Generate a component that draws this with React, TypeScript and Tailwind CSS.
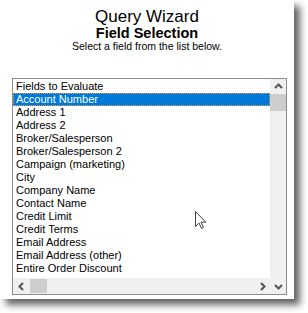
const fields = [
  "Account Number",
  "Address 1",
  "Address 2",
  "Broker/Salesperson",
  "Broker/Salesperson 2",
  "Campaign (marketing)",
  "City",
  "Company Name",
  "Contact Name",
  "Credit Limit",
  "Credit Terms",
  "Email Address",
  "Email Address (other)",
  "Entire Order Discount",
];

function Chevron({ dir }: { dir: "up" | "down" | "left" | "right" }) {
  const pts = {
    up: "1,6 4.5,2.5 8,6",
    down: "1,3 4.5,6.5 8,3",
    left: "6,1 2.5,4.5 6,8",
    right: "3,1 6.5,4.5 3,8",
  }[dir];
  return (
    <svg width="9" height="9" viewBox="0 0 9 9">
      <polyline points={pts} fill="none" stroke="#5a5a5a" strokeWidth="2.2" />
    </svg>
  );
}

export default function App() {
  return (
    <div className="relative w-[308px] h-[313px] bg-white font-['Liberation_Sans',Arial,sans-serif] text-black">
      <div className="w-[294px] h-[299px] bg-white flex flex-col shadow-[6px_6px_7px_rgba(0,0,0,0.6),0_0_2px_rgba(0,0,0,0.12)]">
        {/* Header */}
        <div className="pt-[8px] flex flex-col items-center">
          <div className="text-[17px] leading-[18px]">Query Wizard</div>
          <div className="text-[14.5px] leading-[14px] font-bold">Field Selection</div>
          <div className="text-[10.5px] leading-[12px]">Select a field from the list below.</div>
        </div>

        {/* List box */}
        <div className="mt-[26px] ml-[12px] w-[275px] h-[217px] border border-[#8c8c8c] flex">
          <div className="w-[257px] flex flex-col">
            <div className="flex-1 text-[11px] leading-[13px]">
              <div className="h-[14px] pl-[3px] pt-[1px]">Fields to Evaluate</div>
              {fields.map((f, i) =>
                i === 0 ? (
                  <div
                    key={f}
                    className="h-[13px] pl-[2px] bg-[#0078d7] text-white border border-dotted border-[#e8a040] leading-[11px]"
                  >
                    {f}
                  </div>
                ) : (
                  <div key={f} className="h-[13px] pl-[3px]">
                    {f}
                  </div>
                )
              )}
            </div>
            {/* Horizontal scrollbar */}
            <div className="h-[16px] bg-[#f0f0f0] flex items-center">
              <div className="w-[17px] h-full flex items-center justify-center">
                <Chevron dir="left" />
              </div>
              <div className="w-[17px] h-[14px] bg-[#cdcdcd]" />
              <div className="flex-1" />
              <div className="w-[16px] h-full flex items-center justify-center">
                <Chevron dir="right" />
              </div>
            </div>
          </div>
          {/* Vertical scrollbar */}
          <div className="w-[16px] bg-[#f0f0f0] flex flex-col">
            <div className="h-[15px] flex items-center justify-center">
              <Chevron dir="up" />
            </div>
            <div className="h-[17px] bg-[#cdcdcd]" />
            <div className="flex-1" />
            <div className="h-[16px] flex items-center justify-center">
              <Chevron dir="down" />
            </div>
          </div>
        </div>
      </div>

      {/* Mouse cursor */}
      <svg className="absolute left-[195px] top-[211px]" width="13" height="20" viewBox="0 0 13 20">
        <path
          d="M0.5 0.5 L0.5 15.5 L4 12 L6.5 17.5 L8.5 16.6 L6 11.2 L10.8 11.2 Z"
          fill="white"
          stroke="#404040"
          strokeWidth="1"
          strokeLinejoin="miter"
        />
      </svg>
    </div>
  );
}
